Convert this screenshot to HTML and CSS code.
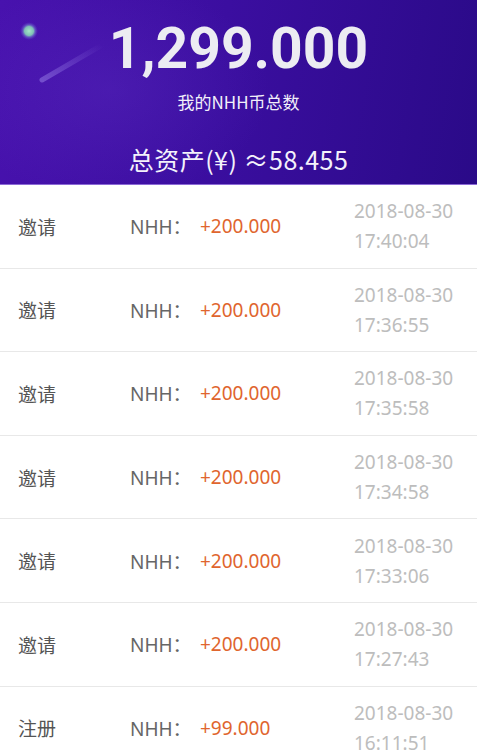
FILE: index.html
```html
<!DOCTYPE html>
<html lang="zh">
<head>
<meta charset="utf-8">
<link rel="stylesheet" href="styles.css">
</head>
<body>
<header class="hero">
  <svg class="hero-deco" width="477" height="185" viewBox="0 0 477 185">
    <defs>
      <radialGradient id="glow" cx="0.5" cy="0.5" r="0.5">
        <stop offset="0" stop-color="#a6e6c8" stop-opacity="1"/>
        <stop offset="0.5" stop-color="#82c9b6" stop-opacity="0.95"/>
        <stop offset="0.7" stop-color="#7a8fd0" stop-opacity="0.5"/>
        <stop offset="1" stop-color="#6a4fd0" stop-opacity="0"/>
      </radialGradient>
      <linearGradient id="streak" x1="0" y1="1" x2="1" y2="0">
        <stop offset="0" stop-color="#8f72e0" stop-opacity="0.6"/>
        <stop offset="1" stop-color="#8f72e0" stop-opacity="0"/>
      </linearGradient>
      <radialGradient id="haze" cx="0.5" cy="0.5" r="0.5">
        <stop offset="0" stop-color="#6a40d0" stop-opacity="0.22"/>
        <stop offset="1" stop-color="#6a40d0" stop-opacity="0"/>
      </radialGradient>
    </defs>
    <ellipse cx="110" cy="90" rx="160" ry="110" fill="url(#haze)"/>
    <circle cx="29" cy="31" r="9" fill="url(#glow)"/>
    <line x1="42" y1="80" x2="102" y2="45" stroke="url(#streak)" stroke-width="5" stroke-linecap="round"/>
  </svg>
  <div class="hero-amount">1,299.000</div>
  <div class="hero-label">我的NHH币总数</div>
  <div class="hero-total">总资产(¥) ≈58.455</div>
</header>
<ul class="records">
  <li class="record"><span class="rec-type">邀请</span><span class="rec-coin">NHH：</span><span class="rec-value">+200.000</span><span class="rec-time">2018-08-30<br>17:40:04</span></li>
  <li class="record"><span class="rec-type">邀请</span><span class="rec-coin">NHH：</span><span class="rec-value">+200.000</span><span class="rec-time">2018-08-30<br>17:36:55</span></li>
  <li class="record"><span class="rec-type">邀请</span><span class="rec-coin">NHH：</span><span class="rec-value">+200.000</span><span class="rec-time">2018-08-30<br>17:35:58</span></li>
  <li class="record"><span class="rec-type">邀请</span><span class="rec-coin">NHH：</span><span class="rec-value">+200.000</span><span class="rec-time">2018-08-30<br>17:34:58</span></li>
  <li class="record"><span class="rec-type">邀请</span><span class="rec-coin">NHH：</span><span class="rec-value">+200.000</span><span class="rec-time">2018-08-30<br>17:33:06</span></li>
  <li class="record"><span class="rec-type">邀请</span><span class="rec-coin">NHH：</span><span class="rec-value">+200.000</span><span class="rec-time">2018-08-30<br>17:27:43</span></li>
  <li class="record"><span class="rec-type">注册</span><span class="rec-coin">NHH：</span><span class="rec-value">+99.000</span><span class="rec-time">2018-08-30<br>16:11:51</span></li>
</ul>
</body>
</html>
```
FILE: styles.css
```css
* { box-sizing: border-box; }
html, body { margin: 0; padding: 0; }
body {
  background: #fff;
  font-family: "Noto Sans", "Noto Sans CJK SC", sans-serif;
  overflow: hidden;
}
.hero {
  position: relative;
  height: 185px;
  background: linear-gradient(100deg, #4812ae 0%, #3b0ea0 45%, #2a0a88 100%);
  border-bottom: 1px solid #8c6ad6;
  display: flex;
  flex-direction: column;
  align-items: center;
  color: #fff;
  padding-top: 16px;
}
.hero-deco {
  position: absolute;
  left: 0;
  top: 0;
  pointer-events: none;
}
.hero-amount {
  position: relative;
  font-family: "Roboto", "Noto Sans", sans-serif;
  font-weight: 700;
  font-size: 57px;
  line-height: 66px;
  color: #ececf2;
}
.hero-label {
  position: relative;
  font-family: "Noto Sans CJK SC", sans-serif;
  font-size: 17px;
  line-height: 24px;
  margin-top: 8px;
  color: #f2f0fa;
}
.hero-total {
  position: relative;
  font-family: "Noto Sans CJK SC", sans-serif;
  font-size: 25px;
  line-height: 32px;
  letter-spacing: 0.5px;
  margin-top: 29px;
  color: #f4f2fb;
}
.records {
  list-style: none;
  margin: 0;
  padding: 0;
}
.record {
  height: 83.6px;
  border-bottom: 1px solid #e8e8e8;
  display: flex;
  align-items: center;
  font-family: "Noto Sans", "Noto Sans CJK SC", sans-serif;
  font-size: 19px;
}
.rec-type {
  width: 130px;
  padding-left: 18px;
  color: #555;
  font-family: "Noto Sans CJK SC", sans-serif;
}
.rec-coin {
  width: 70px;
  color: #666;
}
.rec-value {
  flex: 1;
  color: #e0652e;
}
.rec-time {
  width: 123px;
  color: #bdbdbd;
  line-height: 30px;
}
```
